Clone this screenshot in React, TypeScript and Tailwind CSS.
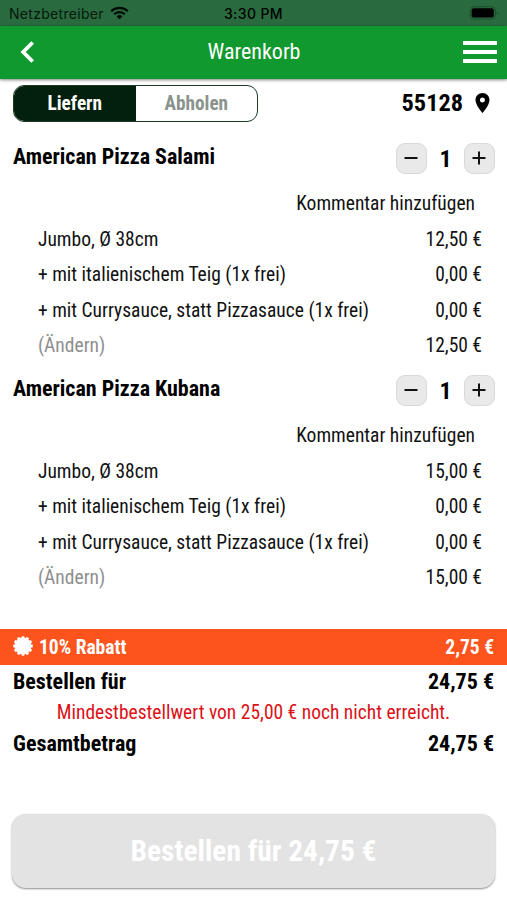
import React, { useState } from 'react';
import clsx from 'clsx';

type CartItem = {
  name: string;
  quantity: number;
  options: { label: string; price: string }[];
  total: string;
};

const items: CartItem[] = [
  {
    name: 'American Pizza Salami',
    quantity: 1,
    options: [
      { label: 'Jumbo, Ø 38cm', price: '12,50 €' },
      { label: '+ mit italienischem Teig (1x frei)', price: '0,00 €' },
      { label: '+ mit Currysauce, statt Pizzasauce (1x frei)', price: '0,00 €' },
    ],
    total: '12,50 €',
  },
  {
    name: 'American Pizza Kubana',
    quantity: 1,
    options: [
      { label: 'Jumbo, Ø 38cm', price: '15,00 €' },
      { label: '+ mit italienischem Teig (1x frei)', price: '0,00 €' },
      { label: '+ mit Currysauce, statt Pizzasauce (1x frei)', price: '0,00 €' },
    ],
    total: '15,00 €',
  },
];

const StatusBar = () => (
  <div className="grid h-[26px] grid-cols-3 items-center bg-[#296b3f] px-2 font-['Inter',sans-serif] text-[14px] text-[#06170c]">
    <div className="flex items-center gap-[6px] pl-px">
      <span className="tracking-[0.3px]">Netzbetreiber</span>
      <svg width="19" height="14" viewBox="0 0 19 14" fill="none" stroke="#020a05" strokeWidth="2.3">
        <path d="M1.2 5.2a11.8 11.8 0 0 1 16.6 0" />
        <path d="M4.2 8.3a7.5 7.5 0 0 1 10.6 0" />
        <path d="M9.5 13.2 6.6 10.4a4.1 4.1 0 0 1 5.8 0z" fill="#020a05" stroke="none" />
      </svg>
    </div>
    <span className="text-center font-medium tracking-[0.4px] text-black">3:30 PM</span>
    <svg className="justify-self-end" width="30" height="14" viewBox="0 0 30 14">
      <rect x="1" y="0.7" width="25.5" height="12.4" rx="4" fill="none" stroke="#1d4f2d" />
      <rect x="2.6" y="2.3" width="22.2" height="9.2" rx="2" fill="#000" />
      <path d="M27.8 5v4c1.2-.5 1.2-3.5 0-4z" fill="#1d4f2d" />
    </svg>
  </div>
);

const Header = () => (
  <header className="grid h-[53px] grid-cols-[1fr_auto_1fr] items-center bg-[#10992e] pl-5 pr-[10px] text-white shadow-[0_1px_3px_rgba(0,0,0,0.5)]">
    <button aria-label="Zurück" className="-mt-0.5">
      <svg width="15" height="22" viewBox="0 0 15 22" fill="none" stroke="currentColor" strokeWidth="3.8">
        <path d="M12.7 1.5 3.2 11l9.5 9.5" />
      </svg>
    </button>
    <h1 className="-mt-0.5 mr-[9px] text-[22px]">Warenkorb</h1>
    <button aria-label="Menü" className="-mt-px flex flex-col gap-[5px] justify-self-end">
      <span className="h-[4px] w-[34px] bg-white" />
      <span className="h-[4px] w-[34px] bg-white" />
      <span className="h-[4px] w-[34px] bg-white" />
    </button>
  </header>
);

const DeliveryRow = () => {
  const [mode, setMode] = useState<'deliver' | 'pickup'>('deliver');

  return (
    <div className="flex h-[52px] items-start justify-between pl-[13px] pr-[17px] pt-[6px]">
      <div className="flex h-[37px] w-[245px] overflow-hidden rounded-[11px] border border-[#1f3a27] text-[19.3px] font-bold">
        <button
          onClick={() => setMode('deliver')}
          className={clsx('flex-1 pt-0.5', mode === 'deliver' ? 'bg-[#02200b] text-white' : 'text-[#8a938c]')}
        >
          Liefern
        </button>
        <button
          onClick={() => setMode('pickup')}
          className={clsx('flex-1 pt-0.5', mode === 'pickup' ? 'bg-[#02200b] text-white' : 'text-[#8a938c]')}
        >
          Abholen
        </button>
      </div>
      <div className="flex h-[37px] items-center gap-3 text-[24.3px] font-bold">
        <span>55128</span>
        <svg className="-mt-0.5" width="15" height="20" viewBox="5 2 14 20" fill="#000">
          <path d="M12 2C8.13 2 5 5.13 5 9c0 5.25 7 13 7 13s7-7.75 7-13c0-3.87-3.13-7-7-7zm0 9.5a2.5 2.5 0 1 1 0-5 2.5 2.5 0 0 1 0 5z" />
        </svg>
      </div>
    </div>
  );
};

const StepButton = ({ plus = false, onClick }: { plus?: boolean; onClick: () => void }) => (
  <button
    onClick={onClick}
    aria-label={plus ? 'Mehr' : 'Weniger'}
    className="flex h-[31px] w-[31px] items-center justify-center rounded-[9px] border border-[#d9d9d9] bg-[#e9e9e9] pb-px pr-px"
  >
    <svg width="14" height="14" viewBox="0 0 14 14" stroke="#111" strokeWidth="2">
      <path d={plus ? 'M.5 7h13M7 .5v13' : 'M.5 7h13'} />
    </svg>
  </button>
);

const CartEntry = ({ item }: { item: CartItem }) => {
  const [quantity, setQuantity] = useState(item.quantity);

  return (
    <section className="h-[232px] pt-3">
      <div className="flex h-[43px] justify-between pl-[13px] pr-3">
        <h2 className="text-[22px] font-bold leading-[28px]">{item.name}</h2>
        <div className="flex h-[31px] items-center">
          <StepButton onClick={() => setQuantity(Math.max(0, quantity - 1))} />
          <span className="w-[37px] text-center text-[24px] font-bold">{quantity}</span>
          <StepButton plus onClick={() => setQuantity(quantity + 1)} />
        </div>
      </div>
      <div className="text-[19.5px] leading-[35.5px] text-[#111]">
        <div className="pr-8 text-right">Kommentar hinzufügen</div>
        {item.options.map((option) => (
          <div key={option.label} className="flex justify-between pl-[38px] pr-[25px]">
            <span>{option.label}</span>
            <span>{option.price}</span>
          </div>
        ))}
        <div className="flex justify-between pl-[38px] pr-[25px]">
          <span className="text-[#8e8e8e]">(Ändern)</span>
          <span>{item.total}</span>
        </div>
      </div>
    </section>
  );
};

const App = () => {
  return (
    <div className="flex h-[900px] w-[507px] flex-col bg-white font-['Roboto_Condensed','Roboto',sans-serif] text-black [font-stretch:75%]">
      <StatusBar />
      <Header />
      <DeliveryRow />
      {items.map((item) => (
        <CartEntry key={item.name} item={item} />
      ))}

      <div className="mt-[34px] flex h-[36px] items-center justify-between bg-[#fd541e] px-[13px] pt-px text-[19.5px] font-bold text-white">
        <div className="flex items-center gap-[6px]">
          <svg className="-mt-1" width="20" height="20" viewBox="-10 -10 20 20" fill="currentColor">
            <circle r="8.4" />
            {[0, 30, 60, 90, 120, 150].map((angle) => (
              <rect key={angle} x="-1.5" y="-9.8" width="3" height="19.6" rx="0.8" transform={`rotate(${angle})`} />
            ))}
          </svg>
          <span>10% Rabatt</span>
        </div>
        <span>2,75 €</span>
      </div>

      <div className="px-[13px] pt-px text-[22px] font-bold leading-[31px]">
        <div className="flex justify-between">
          <span>Bestellen für</span>
          <span>24,75 €</span>
        </div>
        <p className="text-center text-[19.5px] font-normal leading-[31px] text-[#dc1118]">
          Mindestbestellwert von 25,00 € noch nicht erreicht.
        </p>
        <div className="flex justify-between">
          <span>Gesamtbetrag</span>
          <span>24,75 €</span>
        </div>
      </div>

      <button className="mx-3 mt-[55px] h-[74px] rounded-[14px] bg-[#e3e3e3] text-[29.4px] font-bold text-white shadow-[0_1px_2px_rgba(0,0,0,0.45)]">
        Bestellen für 24,75 €
      </button>
    </div>
  );
};

export default App;
